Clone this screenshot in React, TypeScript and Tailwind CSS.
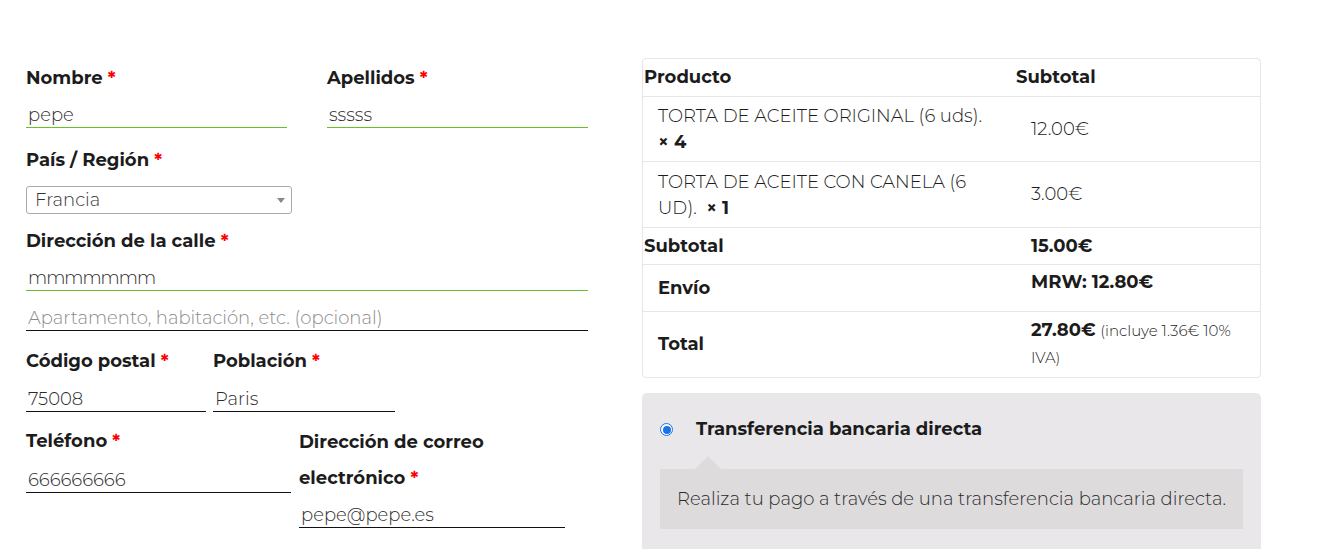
import React from 'react';

const font = { fontFamily: '"Montserrat", "Open Sans", "Noto Sans", sans-serif' };

const Req = () => <span className="text-[#ff0000]"> *</span>;

const Label: React.FC<{ text: string; className?: string }> = ({ text, className = '' }) => (
  <div className={`text-[18px] font-bold text-[#1c1c1c] leading-[36px] ${className}`}>
    {text}
    <Req />
  </div>
);

const Field: React.FC<{ value: string; green?: boolean; placeholder?: boolean; className?: string }> = ({
  value,
  green,
  placeholder,
  className = '',
}) => (
  <div
    className={`h-[27px] flex items-center px-[2px] pt-[2px] text-[18px] font-light border-b ${
      green ? 'border-[#66c02c]' : 'border-[#111]'
    } ${placeholder ? 'text-[#8a8a8a]' : 'text-[#2a2a2a]'} ${className}`}
  >
    {value}
  </div>
);

const BillingForm = () => (
  <div className="w-[562px] flex flex-col">
    <div className="flex gap-[40px] mt-[60px]">
      <div className="w-[261px]">
        <Label text="Nombre" />
        <Field value="pepe" green className="mt-[5px]" />
      </div>
      <div className="w-[261px]">
        <Label text="Apellidos" />
        <Field value="sssss" green className="mt-[5px]" />
      </div>
    </div>
    <Label text="País / Región" className="mt-[14px]" />
    <div className="mt-[8px] w-[266px] h-[28px] border border-[#aaa] rounded-[3px] flex items-center justify-between pl-[8px] pr-[6px] text-[18px] font-light text-[#333]">
      <span>Francia</span>
      <span className="w-0 h-0 border-l-[4px] border-r-[4px] border-t-[5px] border-l-transparent border-r-transparent border-t-[#888]" />
    </div>
    <Label text="Dirección de la calle" className="mt-[9px]" />
    <Field value="mmmmmmm" green className="mt-[5px] tracking-[-1px]" />
    <Field value="Apartamento, habitación, etc. (opcional)" placeholder className="mt-[13px]" />
    <div className="flex gap-[7px] mt-[12px]">
      <div className="w-[180px]">
        <Label text="Código postal" />
        <Field value="75008" className="mt-[6px]" />
      </div>
      <div className="w-[182px]">
        <Label text="Población" />
        <Field value="Paris" className="mt-[6px]" />
      </div>
    </div>
    <div className="flex gap-[8px] mt-[11px]">
      <div className="w-[265px]">
        <Label text="Teléfono" />
        <Field value="666666666" className="mt-[7px]" />
      </div>
      <div className="w-[266px]">
        <div className="text-[18px] font-bold text-[#1c1c1c] leading-[36px] pt-[1px]">
          Dirección de correo electrónico
          <Req />
        </div>
        <Field value="pepe@pepe.es" className="mt-[5px]" />
      </div>
    </div>
  </div>
);

const Row: React.FC<{ h: string; last?: boolean; children: React.ReactNode }> = ({ h, last, children }) => (
  <div className={`grid grid-cols-[372px_1fr] items-center ${h} ${last ? '' : 'border-b border-[#e6e6e6]'}`}>
    {children}
  </div>
);

const OrderReview = () => (
  <div className="w-[619px] flex flex-col">
    <div className="mt-[58px] border border-[#e6e6e6] rounded-[4px] text-[#1c1c1c]">
      <Row h="h-[38px]">
        <div className="pl-[1px] text-[18px] font-bold">Producto</div>
        <div className="pl-[1px] text-[18px] font-bold">Subtotal</div>
      </Row>
      <Row h="h-[65px]">
        <div className="pl-[15px] pr-[17px] text-[18px] font-light leading-[26px]">
          TORTA DE ACEITE ORIGINAL (6 uds).{' '}
          <span className="font-bold text-[18px] whitespace-nowrap">× 4</span>
        </div>
        <div className="pl-[16px] text-[18px] font-light">12.00€</div>
      </Row>
      <Row h="h-[66px]">
        <div className="pl-[15px] pr-[17px] text-[18px] font-light leading-[26px]">
          TORTA DE ACEITE CON CANELA (6 UD).&nbsp;{' '}
          <span className="font-bold text-[18px] whitespace-nowrap">× 1</span>
        </div>
        <div className="pl-[16px] text-[18px] font-light">3.00€</div>
      </Row>
      <Row h="h-[37px]">
        <div className="pl-[1px] text-[18px] font-bold">Subtotal</div>
        <div className="pl-[16px] text-[18px] font-bold">15.00€</div>
      </Row>
      <Row h="h-[47px]">
        <div className="pl-[15px] text-[18px] font-bold">Envío</div>
        <div className="pl-[16px] text-[18px] font-bold self-start pt-[4px]">MRW: 12.80€</div>
      </Row>
      <Row h="h-[65px]" last>
        <div className="pl-[15px] text-[18px] font-bold">Total</div>
        <div className="pl-[16px] text-[18px] leading-[27px] self-start pt-[5px]">
          <span className="font-bold">27.80€</span>{' '}
          <span className="text-[15px] font-light">(incluye 1.36€ 10% IVA)</span>
        </div>
      </Row>
    </div>
    <div className="mt-[15px] bg-[#e9e7ea] rounded-t-[5px] px-[18px] pt-[23px] pb-[22px]">
      <div className="flex items-center">
        <span className="w-[13px] h-[13px] rounded-full border border-[#1a73e8] bg-white flex items-center justify-center">
          <span className="w-[8px] h-[8px] rounded-full bg-[#1a73e8]" />
        </span>
        <span className="ml-[23px] text-[18px] font-bold text-[#1c1c1c]">Transferencia bancaria directa</span>
      </div>
      <div className="mt-[26px] relative">
        <span className="absolute left-[35px] top-[-13px] w-0 h-0 border-l-[13px] border-r-[13px] border-b-[13px] border-l-transparent border-r-transparent border-b-[#dddbdc]" />
        <div className="bg-[#dddbdc] h-[60px] flex items-center px-[17px] text-[18px] font-light text-[#2a2a2a]">
          Realiza tu pago a través de una transferencia bancaria directa.
        </div>
      </div>
    </div>
  </div>
);

export default function App() {
  return (
    <div className="w-[1321px] h-[549px] bg-white overflow-hidden flex pl-[26px] gap-[54px]" style={font}>
      <BillingForm />
      <OrderReview />
    </div>
  );
}
